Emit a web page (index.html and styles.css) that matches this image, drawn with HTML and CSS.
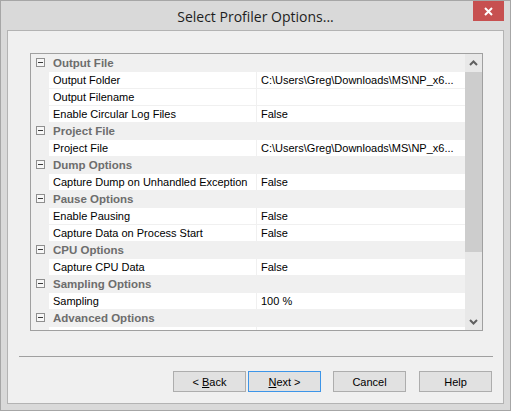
FILE: index.html
```html
<!DOCTYPE html>
<html>
<head>
<meta charset="utf-8">
<link rel="stylesheet" href="styles.css">
</head>
<body>
<div class="window">
  <div class="titlebar">
    <span class="title">Select Profiler Options...</span>
    <div class="close"><svg width="9" height="9" viewBox="0 0 9 9"><path d="M1 1 L8 8 M8 1 L1 8" stroke="#fff" stroke-width="2" fill="none"/></svg></div>
  </div>
  <div class="client">
    <div class="grid">
      <div class="rows">
        <div class="cat"><span class="toggle"></span><span class="cat-label">Output File</span></div>
        <div class="row"><span></span><span class="cell">Output Folder</span><span class="cell">C:\Users\Greg\Downloads\MS\NP_x6...</span></div>
        <div class="row"><span></span><span class="cell">Output Filename</span><span class="cell"></span></div>
        <div class="row"><span></span><span class="cell">Enable Circular Log Files</span><span class="cell">False</span></div>
        <div class="cat"><span class="toggle"></span><span class="cat-label">Project File</span></div>
        <div class="row"><span></span><span class="cell">Project File</span><span class="cell">C:\Users\Greg\Downloads\MS\NP_x6...</span></div>
        <div class="cat"><span class="toggle"></span><span class="cat-label">Dump Options</span></div>
        <div class="row"><span></span><span class="cell">Capture Dump on Unhandled Exception</span><span class="cell">False</span></div>
        <div class="cat"><span class="toggle"></span><span class="cat-label">Pause Options</span></div>
        <div class="row"><span></span><span class="cell">Enable Pausing</span><span class="cell">False</span></div>
        <div class="row"><span></span><span class="cell">Capture Data on Process Start</span><span class="cell">False</span></div>
        <div class="cat"><span class="toggle"></span><span class="cat-label">CPU Options</span></div>
        <div class="row"><span></span><span class="cell">Capture CPU Data</span><span class="cell">False</span></div>
        <div class="cat"><span class="toggle"></span><span class="cat-label">Sampling Options</span></div>
        <div class="row"><span></span><span class="cell">Sampling</span><span class="cell">100 %</span></div>
        <div class="cat"><span class="toggle"></span><span class="cat-label">Advanced Options</span></div>
        <div class="row"><span></span><span class="cell"></span><span class="cell"></span></div>
      </div>
      <div class="scrollbar">
        <div class="sb-btn"><svg width="9" height="6" viewBox="0 0 9 6"><path d="M1 5 L4.5 1.5 L8 5" stroke="#606060" stroke-width="2" fill="none"/></svg></div>
        <div class="track"><div class="thumb"></div></div>
        <div class="sb-btn"><svg width="9" height="6" viewBox="0 0 9 6"><path d="M1 1 L4.5 4.5 L8 1" stroke="#606060" stroke-width="2" fill="none"/></svg></div>
      </div>
    </div>
    <div class="sep"></div>
    <div class="buttons">
      <button class="btn">&lt; <u>B</u>ack</button>
      <button class="btn default"><u>N</u>ext &gt;</button>
      <button class="btn cancel">Cancel</button>
      <button class="btn help">Help</button>
    </div>
  </div>
</div>
</body>
</html>
```
FILE: styles.css
```css
body {
  margin: 0;
  font-family: "Liberation Sans", Arial, sans-serif;
  font-size: 11px;
  background: #fff;
}
.window {
  position: relative;
  width: 511px;
  height: 411px;
  box-sizing: border-box;
  border: 1px solid #a6a6a6;
  background: #d9d9d9;
  padding: 0 6px 6px;
  display: flex;
  flex-direction: column;
}
.titlebar {
  height: 29px;
  display: flex;
  align-items: center;
  justify-content: center;
}
.title {
  font-family: "Open Sans", sans-serif;
  font-size: 14px;
  color: #1e1e1e;
  margin-top: 2px;
}
.close {
  position: absolute;
  top: 0;
  right: 6px;
  width: 31px;
  height: 20px;
  background: #c75050;
  display: flex;
  align-items: center;
  justify-content: center;
}
.client {
  flex: 1;
  border: 1px solid #b3b3b3;
  background: #f0f0f0;
  display: flex;
  flex-direction: column;
}
.grid {
  margin: 22px 20px 0 22px;
  height: 278px;
  box-sizing: border-box;
  border: 1px solid #a0a0a0;
  background: #f0f0f0;
  display: flex;
  overflow: hidden;
}
.rows {
  width: 434px;
  padding-top: 1px;
}
.row {
  display: grid;
  grid-template-columns: 17px 207px 208px;
  column-gap: 1px;
  height: 17px;
  align-items: start;
}
.cell {
  height: 16px;
  line-height: 16px;
  background: #fff;
  padding-left: 4px;
  white-space: nowrap;
  overflow: hidden;
  color: #000;
}
.cat {
  display: flex;
  height: 17px;
  align-items: start;
}
.toggle {
  position: relative;
  width: 9px;
  height: 9px;
  box-sizing: border-box;
  border: 1px solid #8f8f8f;
  background: #f7f7f7;
  margin: 3px 8px 0 5px;
}
.toggle::after {
  content: "";
  position: absolute;
  left: 1px;
  top: 3px;
  width: 5px;
  height: 1px;
  background: #3a3a3a;
}
.cat-label {
  font-weight: bold;
  color: #6d6d6d;
  line-height: 16px;
  font-size: 11.5px;
}
.scrollbar {
  width: 17px;
  background: #e8e8e8;
  display: flex;
  flex-direction: column;
}
.sb-btn {
  height: 17px;
  display: flex;
  align-items: center;
  justify-content: center;
}
.track {
  flex: 1;
}
.thumb {
  margin: 1px 0 0 0;
  height: 180px;
  background: #cdcdcd;
}
.sep {
  margin: 25px 10px 0 11px;
  height: 1px;
  background: #a0a0a0;
}
.buttons {
  margin-top: 14px;
  display: flex;
  justify-content: flex-end;
  padding-right: 11px;
}
.btn {
  width: 73px;
  height: 21px;
  box-sizing: border-box;
  border: 1px solid #adadad;
  background: #e1e1e1;
  font-family: "Liberation Sans", Arial, sans-serif;
  font-size: 11px;
  color: #000;
  padding: 0;
  margin: 0;
}
.default {
  border-color: #3d95e8;
  margin-left: 2px;
}
.cancel {
  margin-left: 12px;
}
.help {
  margin-left: 13px;
}
```
